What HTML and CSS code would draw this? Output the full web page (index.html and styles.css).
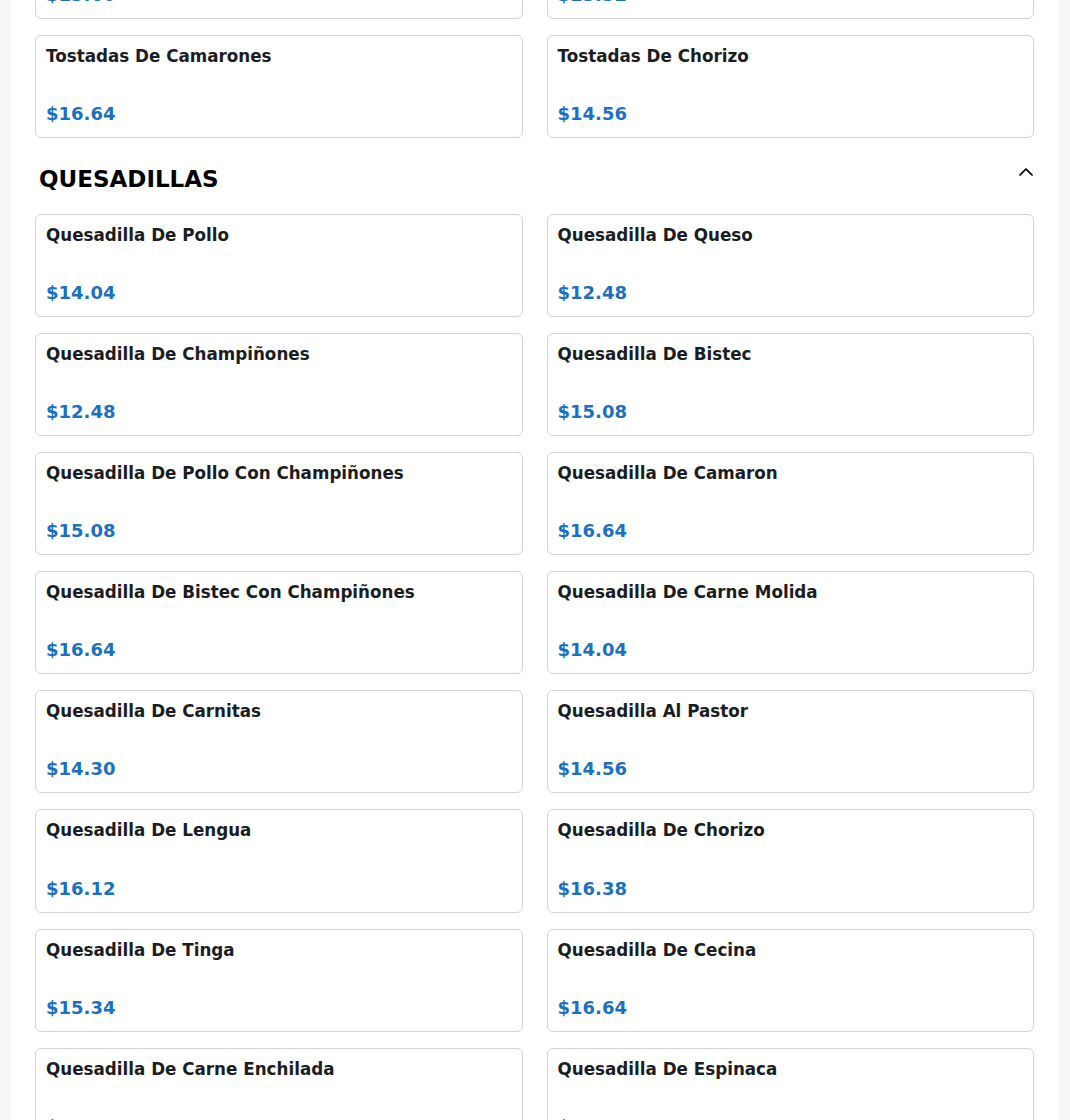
FILE: index.html
```html
<!DOCTYPE html>
<html lang="es">
<head>
<meta charset="utf-8">
<title>Menú</title>
<link rel="stylesheet" href="styles.css">
</head>
<body>
<main class="page">
  <section class="section section-scrolled">
    <div class="grid">
      <div class="card"><h3 class="card-title">Tostadas De Pollo</h3><div class="price">$15.60</div></div>
      <div class="card"><h3 class="card-title">Tostadas De Bistec</h3><div class="price">$15.32</div></div>
      <div class="card"><h3 class="card-title">Tostadas De Camarones</h3><div class="price">$16.64</div></div>
      <div class="card"><h3 class="card-title">Tostadas De Chorizo</h3><div class="price">$14.56</div></div>
    </div>
  </section>
  <section class="section">
    <div class="section-header">
      <h2 class="section-title">QUESADILLAS</h2>
      <button class="toggle" type="button" aria-label="Contraer">
        <svg width="16" height="16" viewBox="0 0 16 16" aria-hidden="true"><path fill="currentColor" stroke="currentColor" stroke-width="0.9" stroke-linejoin="round" fill-rule="evenodd" d="M7.646 4.646a.5.5 0 0 1 .708 0l6 6a.5.5 0 0 1-.708.708L8 5.707l-5.646 5.647a.5.5 0 0 1-.708-.708l6-6z"/></svg>
      </button>
    </div>
    <div class="grid">
      <div class="card"><h3 class="card-title">Quesadilla De Pollo</h3><div class="price">$14.04</div></div>
      <div class="card"><h3 class="card-title">Quesadilla De Queso</h3><div class="price">$12.48</div></div>
      <div class="card"><h3 class="card-title">Quesadilla De Champiñones</h3><div class="price">$12.48</div></div>
      <div class="card"><h3 class="card-title">Quesadilla De Bistec</h3><div class="price">$15.08</div></div>
      <div class="card"><h3 class="card-title">Quesadilla De Pollo Con Champiñones</h3><div class="price">$15.08</div></div>
      <div class="card"><h3 class="card-title">Quesadilla De Camaron</h3><div class="price">$16.64</div></div>
      <div class="card"><h3 class="card-title">Quesadilla De Bistec Con Champiñones</h3><div class="price">$16.64</div></div>
      <div class="card"><h3 class="card-title">Quesadilla De Carne Molida</h3><div class="price">$14.04</div></div>
      <div class="card"><h3 class="card-title">Quesadilla De Carnitas</h3><div class="price">$14.30</div></div>
      <div class="card"><h3 class="card-title">Quesadilla Al Pastor</h3><div class="price">$14.56</div></div>
      <div class="card"><h3 class="card-title">Quesadilla De Lengua</h3><div class="price">$16.12</div></div>
      <div class="card"><h3 class="card-title">Quesadilla De Chorizo</h3><div class="price">$16.38</div></div>
      <div class="card"><h3 class="card-title">Quesadilla De Tinga</h3><div class="price">$15.34</div></div>
      <div class="card"><h3 class="card-title">Quesadilla De Cecina</h3><div class="price">$16.64</div></div>
      <div class="card"><h3 class="card-title">Quesadilla De Carne Enchilada</h3><div class="price">$15.60</div></div>
      <div class="card"><h3 class="card-title">Quesadilla De Espinaca</h3><div class="price">$14.04</div></div>
    </div>
  </section>
</main>
</body>
</html>
```

FILE: styles.css
```css
html, body {
  margin: 0;
  padding: 0;
}

body {
  background: #f8f8f9;
  font-family: "DejaVu Sans", "Liberation Sans", sans-serif;
  color: #212529;
  overflow: hidden;
}

.page {
  margin: 0 11px 0 11px;
  background: #ffffff;
  padding: 0 25px 40px 24px;
  min-height: 1200px;
}

.section-scrolled {
  margin-top: -84.5px;
}

.grid {
  display: grid;
  grid-template-columns: 1fr 1fr;
  column-gap: 24px;
  row-gap: 16px;
}

.card {
  box-sizing: border-box;
  min-height: 103.14px;
  border: 1px solid #d4d4d4;
  border-radius: 6px;
  padding: 10px 10px 13px;
  display: flex;
  flex-direction: column;
  justify-content: space-between;
  background: #fff;
}

.card-title {
  margin: 0;
  font-size: 16.75px;
  font-weight: bold;
  line-height: normal;
  color: #1a1d22;
}

.price {
  font-size: 18px;
  font-weight: bold;
  color: #1c70c2;
  line-height: normal;
}

.section-header {
  display: flex;
  justify-content: space-between;
  align-items: flex-start;
  margin: 28px 0 22px 0;
}

.section-title {
  margin: 0;
  padding-left: 4px;
  font-size: 23px;
  font-weight: bold;
  line-height: normal;
  color: #000;
}

.toggle {
  border: 0;
  background: none;
  padding: 0;
  margin: -2px 0 0 0;
  color: #000;
  display: flex;
  cursor: pointer;
}
```
